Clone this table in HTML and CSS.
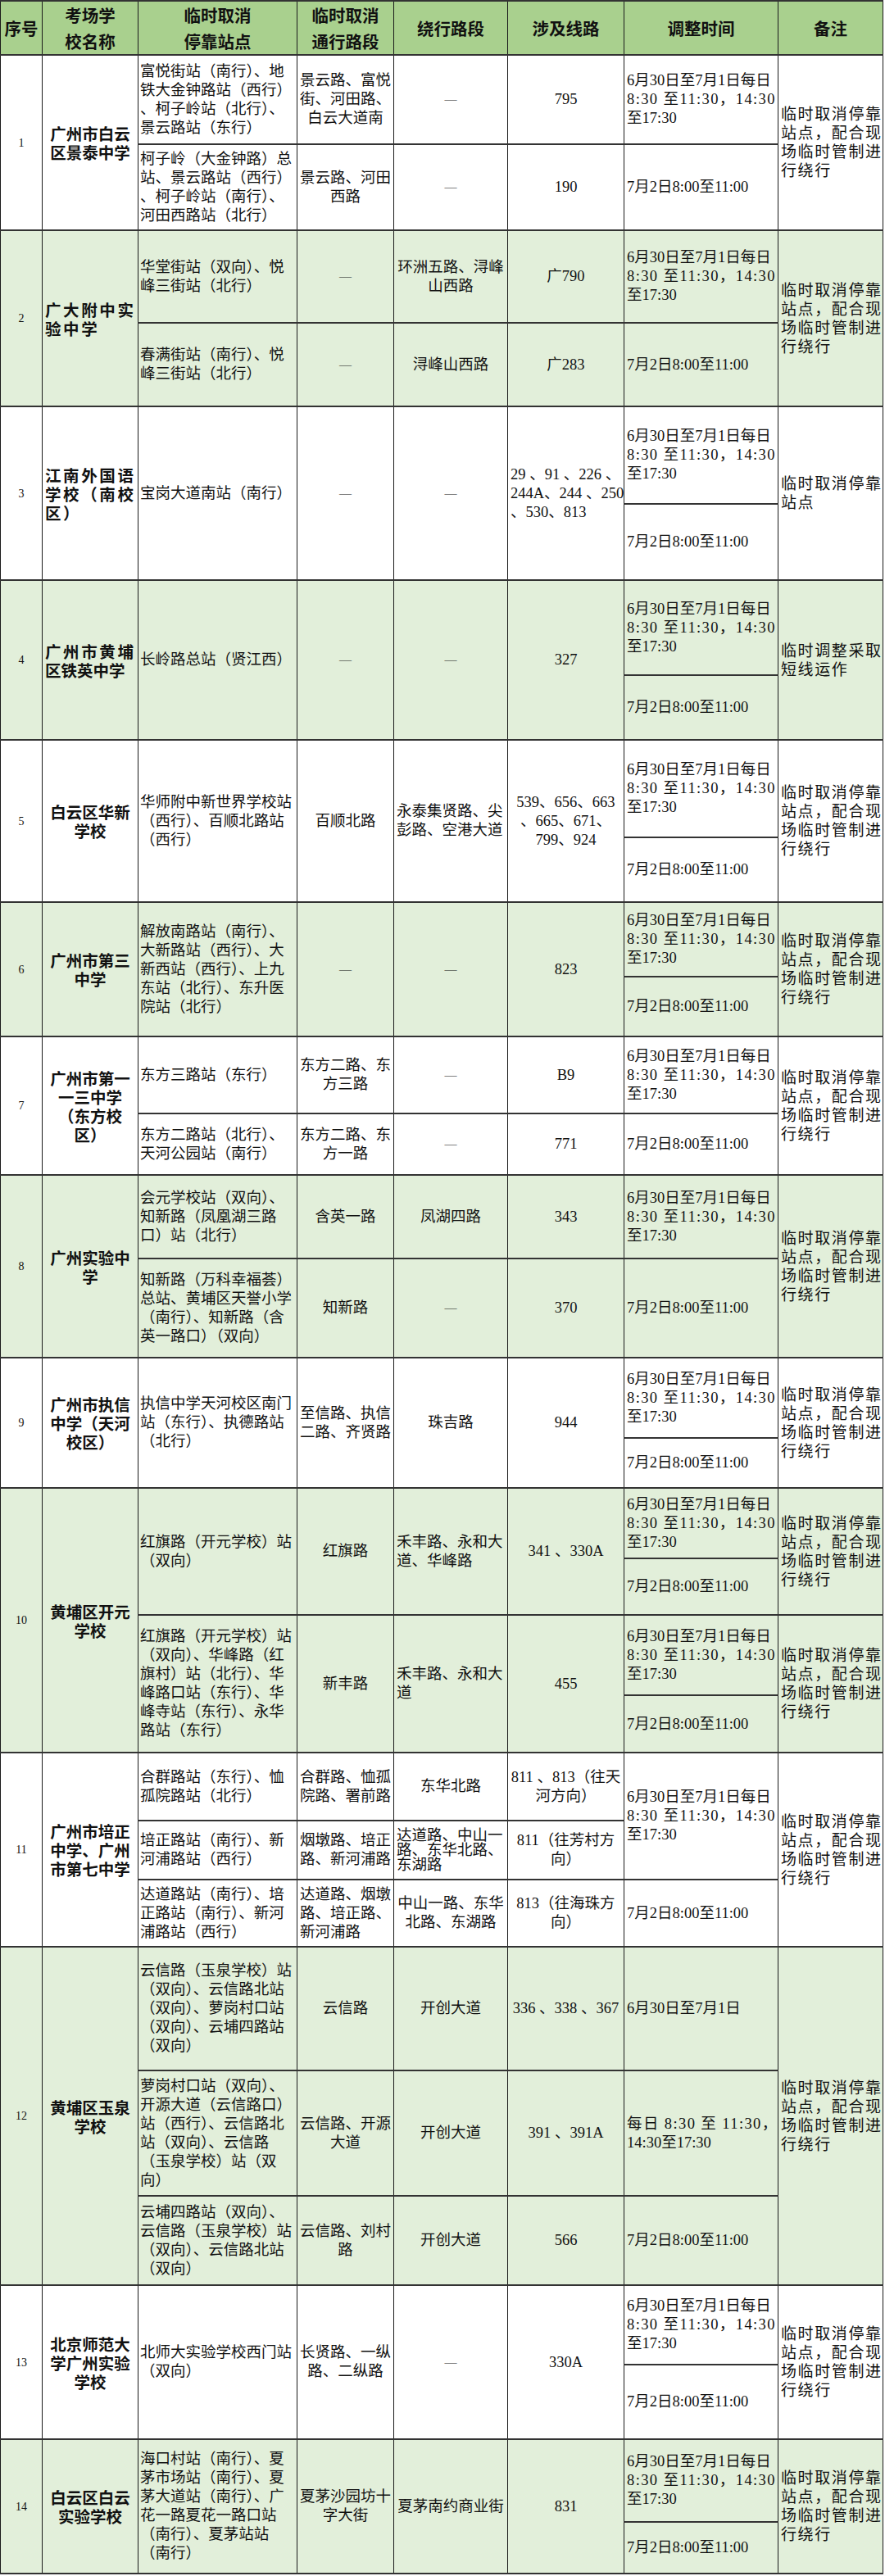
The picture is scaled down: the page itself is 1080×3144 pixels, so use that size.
FILE: index.html
```html
<!DOCTYPE html>
<html lang="zh-CN">
<head>
<meta charset="utf-8">
<title>考场周边公交临时调整</title>
<link rel="stylesheet" href="styles.css">
</head>
<body>
<table class="t">
<colgroup>
<col class="w1"><col class="w2"><col class="w3"><col class="w4"><col class="w5"><col class="w6"><col class="w7"><col class="w8">
</colgroup>
<tr class="h66">
<th>序号</th><th>考场学<br>校名称</th><th>临时取消<br>停靠站点</th><th>临时取消<br>通行路段</th><th>绕行路段</th><th>涉及线路</th><th>调整时间</th><th>备注</th>
</tr>

<!-- 1 -->
<tr class="h109">
<td class="no" rowspan="2">1</td>
<td class="sch" rowspan="2">广州市白云<br>区景泰中学</td>
<td class="stop">富悦街站（南行）、地<br>铁大金钟路站（西行）<br>、柯子岭站（北行）、<br>景云路站（东行）</td>
<td class="ctr">景云路、富悦<br>街、河田路、<br>白云大道南</td>
<td class="ctr dash">—</td>
<td class="ctr">795</td>
<td class="time">6月30日至7月1日每日<br><span class="sp">8:30 至11:30，14:30</span><br>至17:30</td>
<td class="note" rowspan="2">临时取消停靠<br>站点，配合现<br>场临时管制进<br>行绕行</td>
</tr>
<tr class="h105">
<td class="stop">柯子岭（大金钟路）总<br>站、景云路站（西行）<br>、柯子岭站（南行）、<br>河田西路站（北行）</td>
<td class="ctr">景云路、河田<br>西路</td>
<td class="ctr dash">—</td>
<td class="ctr">190</td>
<td class="time">7月2日8:00至11:00</td>
</tr>

<!-- 2 -->
<tr class="g h113">
<td class="no" rowspan="2">2</td>
<td class="sch wide" rowspan="2">广大附中实<br>验中学</td>
<td class="stop">华堂街站（双向）、悦<br>峰三街站（北行）</td>
<td class="ctr dash">—</td>
<td class="ctr">环洲五路、浔峰<br>山西路</td>
<td class="ctr">广790</td>
<td class="time">6月30日至7月1日每日<br><span class="sp">8:30 至11:30，14:30</span><br>至17:30</td>
<td class="note" rowspan="2">临时取消停靠<br>站点，配合现<br>场临时管制进<br>行绕行</td>
</tr>
<tr class="g h102">
<td class="stop">春满街站（南行）、悦<br>峰三街站（北行）</td>
<td class="ctr dash">—</td>
<td class="ctr">浔峰山西路</td>
<td class="ctr">广283</td>
<td class="time">7月2日8:00至11:00</td>
</tr>

<!-- 3 -->
<tr class="h119">
<td class="no" rowspan="2">3</td>
<td class="sch wide" rowspan="2">江南外国语<br>学校（南校<br>区）</td>
<td class="stop" rowspan="2">宝岗大道南站（南行）</td>
<td class="ctr dash" rowspan="2">—</td>
<td class="ctr dash" rowspan="2">—</td>
<td class="lft" rowspan="2">29 、91 、226 、<br>244A、244 、250<br>、530、813</td>
<td class="time">6月30日至7月1日每日<br><span class="sp">8:30 至11:30，14:30</span><br>至17:30</td>
<td class="note" rowspan="2">临时取消停靠<br>站点</td>
</tr>
<tr class="h93">
<td class="time">7月2日8:00至11:00</td>
</tr>

<!-- 4 -->
<tr class="g h116">
<td class="no" rowspan="2">4</td>
<td class="sch lsch" rowspan="2"><span class="ls">广州市黄埔</span><br>区铁英中学</td>
<td class="stop" rowspan="2">长岭路总站（贤江西）</td>
<td class="ctr dash" rowspan="2">—</td>
<td class="ctr dash" rowspan="2">—</td>
<td class="ctr" rowspan="2">327</td>
<td class="time">6月30日至7月1日每日<br><span class="sp">8:30 至11:30，14:30</span><br>至17:30</td>
<td class="note" rowspan="2">临时调整采取<br>短线运作</td>
</tr>
<tr class="g h79">
<td class="time">7月2日8:00至11:00</td>
</tr>

<!-- 5 -->
<tr class="h119">
<td class="no" rowspan="2">5</td>
<td class="sch" rowspan="2">白云区华新<br>学校</td>
<td class="stop" rowspan="2">华师附中新世界学校站<br>（西行）、百顺北路站<br>（西行）</td>
<td class="ctr" rowspan="2">百顺北路</td>
<td class="lft" rowspan="2">永泰集贤路、尖<br>彭路、空港大道</td>
<td class="ctr" rowspan="2">539、656、663<br>、665、671、<br>799、924</td>
<td class="time">6月30日至7月1日每日<br><span class="sp">8:30 至11:30，14:30</span><br>至17:30</td>
<td class="note" rowspan="2">临时取消停靠<br>站点，配合现<br>场临时管制进<br>行绕行</td>
</tr>
<tr class="h79">
<td class="time">7月2日8:00至11:00</td>
</tr>

<!-- 6 -->
<tr class="g h91">
<td class="no" rowspan="2">6</td>
<td class="sch" rowspan="2">广州市第三<br>中学</td>
<td class="stop" rowspan="2">解放南路站（南行）、<br>大新路站（西行）、大<br>新西站（西行）、上九<br>东站（北行）、东升医<br>院站（北行）</td>
<td class="ctr dash" rowspan="2">—</td>
<td class="ctr dash" rowspan="2">—</td>
<td class="ctr" rowspan="2">823</td>
<td class="time">6月30日至7月1日每日<br><span class="sp">8:30 至11:30，14:30</span><br>至17:30</td>
<td class="note" rowspan="2">临时取消停靠<br>站点，配合现<br>场临时管制进<br>行绕行</td>
</tr>
<tr class="g h73">
<td class="time">7月2日8:00至11:00</td>
</tr>

<!-- 7 -->
<tr class="h94">
<td class="no" rowspan="2">7</td>
<td class="sch" rowspan="2">广州市第一<br>一三中学<br>（东方校<br>区）</td>
<td class="stop">东方三路站（东行）</td>
<td class="ctr">东方二路、东<br>方三路</td>
<td class="ctr dash">—</td>
<td class="ctr">B9</td>
<td class="time">6月30日至7月1日每日<br><span class="sp">8:30 至11:30，14:30</span><br>至17:30</td>
<td class="note" rowspan="2">临时取消停靠<br>站点，配合现<br>场临时管制进<br>行绕行</td>
</tr>
<tr class="h75">
<td class="stop">东方二路站（北行）、<br>天河公园站（南行）</td>
<td class="ctr">东方二路、东<br>方一路</td>
<td class="ctr dash">—</td>
<td class="ctr">771</td>
<td class="time">7月2日8:00至11:00</td>
</tr>

<!-- 8 -->
<tr class="g h102">
<td class="no" rowspan="2">8</td>
<td class="sch" rowspan="2">广州实验中<br>学</td>
<td class="stop">会元学校站（双向）、<br>知新路（凤凰湖三路<br>口）站（北行）</td>
<td class="ctr">含英一路</td>
<td class="ctr">凤湖四路</td>
<td class="ctr">343</td>
<td class="time">6月30日至7月1日每日<br><span class="sp">8:30 至11:30，14:30</span><br>至17:30</td>
<td class="note" rowspan="2">临时取消停靠<br>站点，配合现<br>场临时管制进<br>行绕行</td>
</tr>
<tr class="g h121">
<td class="stop">知新路（万科幸福荟）<br>总站、黄埔区天誉小学<br>（南行）、知新路（含<br>英一路口）（双向）</td>
<td class="ctr">知新路</td>
<td class="ctr dash">—</td>
<td class="ctr">370</td>
<td class="time">7月2日8:00至11:00</td>
</tr>

<!-- 9 -->
<tr class="h98">
<td class="no" rowspan="2">9</td>
<td class="sch" rowspan="2">广州市执信<br>中学（天河<br>校区）</td>
<td class="stop" rowspan="2">执信中学天河校区南门<br>站（东行）、执德路站<br>（北行）</td>
<td class="ctr" rowspan="2">至信路、执信<br>二路、齐贤路</td>
<td class="ctr" rowspan="2">珠吉路</td>
<td class="ctr" rowspan="2">944</td>
<td class="time">6月30日至7月1日每日<br><span class="sp">8:30 至11:30，14:30</span><br>至17:30</td>
<td class="note" rowspan="2">临时取消停靠<br>站点，配合现<br>场临时管制进<br>行绕行</td>
</tr>
<tr class="h61">
<td class="time">7月2日8:00至11:00</td>
</tr>

<!-- 10 -->
<tr class="g h86">
<td class="no" rowspan="4">10</td>
<td class="sch" rowspan="4">黄埔区开元<br>学校</td>
<td class="stop" rowspan="2">红旗路（开元学校）站<br>（双向）</td>
<td class="ctr" rowspan="2">红旗路</td>
<td class="lft" rowspan="2">禾丰路、永和大<br>道、华峰路</td>
<td class="ctr" rowspan="2">341 、330A</td>
<td class="time">6月30日至7月1日每日<br><span class="sp">8:30 至11:30，14:30</span><br>至17:30</td>
<td class="note" rowspan="2">临时取消停靠<br>站点，配合现<br>场临时管制进<br>行绕行</td>
</tr>
<tr class="g h69">
<td class="time">7月2日8:00至11:00</td>
</tr>
<tr class="g h98">
<td class="stop" rowspan="2">红旗路（开元学校）站<br>（双向）、华峰路（红<br>旗村）站（北行）、华<br>峰路口站（东行）、华<br>峰寺站（东行）、永华<br>路站（东行）</td>
<td class="ctr" rowspan="2">新丰路</td>
<td class="lft" rowspan="2">禾丰路、永和大<br>道</td>
<td class="ctr" rowspan="2">455</td>
<td class="time">6月30日至7月1日每日<br><span class="sp">8:30 至11:30，14:30</span><br>至17:30</td>
<td class="note" rowspan="2">临时取消停靠<br>站点，配合现<br>场临时管制进<br>行绕行</td>
</tr>
<tr class="g h70">
<td class="time">7月2日8:00至11:00</td>
</tr>

<!-- 11 -->
<tr class="h83">
<td class="no" rowspan="3">11</td>
<td class="sch" rowspan="3">广州市培正<br>中学、广州<br>市第七中学</td>
<td class="stop">合群路站（东行）、恤<br>孤院路站（北行）</td>
<td class="ctr">合群路、恤孤<br>院路、署前路</td>
<td class="ctr">东华北路</td>
<td class="ctr">811 、813（往天<br>河方向）</td>
<td class="time" rowspan="2">6月30日至7月1日每日<br><span class="sp">8:30 至11:30，14:30</span><br>至17:30</td>
<td class="note" rowspan="3">临时取消停靠<br>站点，配合现<br>场临时管制进<br>行绕行</td>
</tr>
<tr class="h72">
<td class="stop">培正路站（南行）、新<br>河浦路站（西行）</td>
<td class="ctr">烟墩路、培正<br>路、新河浦路</td>
<td class="lft tight">达道路、中山一<br>路、东华北路、<br>东湖路</td>
<td class="ctr">811（往芳村方<br>向）</td>
</tr>
<tr class="h82">
<td class="stop">达道路站（南行）、培<br>正路站（南行）、新河<br>浦路站（西行）</td>
<td class="lft">达道路、烟墩<br>路、培正路、<br>新河浦路</td>
<td class="ctr">中山一路、东华<br>北路、东湖路</td>
<td class="ctr">813（往海珠方<br>向）</td>
<td class="time">7月2日8:00至11:00</td>
</tr>

<!-- 12 -->
<tr class="g h151">
<td class="no" rowspan="3">12</td>
<td class="sch" rowspan="3">黄埔区玉泉<br>学校</td>
<td class="stop">云信路（玉泉学校）站<br>（双向）、云信路北站<br>（双向）、萝岗村口站<br>（双向）、云埔四路站<br>（双向）</td>
<td class="ctr">云信路</td>
<td class="ctr">开创大道</td>
<td class="ctr">336 、338 、367</td>
<td class="time">6月30日至7月1日</td>
<td class="note" rowspan="3">临时取消停靠<br>站点，配合现<br>场临时管制进<br>行绕行</td>
</tr>
<tr class="g h153">
<td class="stop">萝岗村口站（双向）、<br>开源大道（云信路口）<br>站（西行）、云信路北<br>站（双向）、云信路<br>（玉泉学校）站（双<br>向）</td>
<td class="ctr">云信路、开源<br>大道</td>
<td class="ctr">开创大道</td>
<td class="ctr">391 、391A</td>
<td class="time"><span class="sp">每日 8:30 至 11:30，</span><br>14:30至17:30</td>
</tr>
<tr class="g h109">
<td class="stop">云埔四路站（双向）、<br>云信路（玉泉学校）站<br>（双向）、云信路北站<br>（双向）</td>
<td class="ctr">云信路、刘村<br>路</td>
<td class="ctr">开创大道</td>
<td class="ctr">566</td>
<td class="time">7月2日8:00至11:00</td>
</tr>

<!-- 13 -->
<tr class="h97">
<td class="no" rowspan="2">13</td>
<td class="sch" rowspan="2">北京师范大<br>学广州实验<br>学校</td>
<td class="stop" rowspan="2">北师大实验学校西门站<br>（双向）</td>
<td class="ctr" rowspan="2">长贤路、一纵<br>路、二纵路</td>
<td class="ctr dash" rowspan="2">—</td>
<td class="ctr" rowspan="2">330A</td>
<td class="time">6月30日至7月1日每日<br><span class="sp">8:30 至11:30，14:30</span><br>至17:30</td>
<td class="note" rowspan="2">临时取消停靠<br>站点，配合现<br>场临时管制进<br>行绕行</td>
</tr>
<tr class="h91">
<td class="time">7月2日8:00至11:00</td>
</tr>

<!-- 14 -->
<tr class="g h101">
<td class="no" rowspan="2">14</td>
<td class="sch" rowspan="2">白云区白云<br>实验学校</td>
<td class="stop" rowspan="2">海口村站（南行）、夏<br>茅市场站（南行）、夏<br>茅大道站（南行）、广<br>花一路夏花一路口站<br>（南行）、夏茅站站<br>（南行）</td>
<td class="ctr" rowspan="2">夏茅沙园坊十<br>字大街</td>
<td class="ctr" rowspan="2">夏茅南约商业街</td>
<td class="ctr" rowspan="2">831</td>
<td class="time">6月30日至7月1日每日<br><span class="sp">8:30 至11:30，14:30</span><br>至17:30</td>
<td class="note" rowspan="2">临时取消停靠<br>站点，配合现<br>场临时管制进<br>行绕行</td>
</tr>
<tr class="g h63">
<td class="time">7月2日8:00至11:00</td>
</tr>
</table>
</body>
</html>
```

FILE: styles.css
```css
html, body {
  margin: 0;
  padding: 0;
  background: #ffffff;
}
body {
  width: 1080px;
}
.t {
  border-collapse: collapse;
  table-layout: fixed;
  width: 1077px;
  font-family: "Liberation Serif", "Noto Sans CJK SC", serif;
  font-size: 18.5px;
  line-height: 23px;
  color: #111111;
}
.w1 { width: 51px; }
.w2 { width: 117px; }
.w3 { width: 194px; }
.w4 { width: 118px; }
.w5 { width: 139px; }
.w6 { width: 142px; }
.w7 { width: 188px; }
.w8 { width: 128px; }

.t td, .t th {
  border-left: 1px solid #1a1a1a;
  border-right: 1px solid #1a1a1a;
  border-top: 2px solid #333333;
  border-bottom: 2px solid #333333;
  padding: 0 2px;
  vertical-align: middle;
  white-space: nowrap;
  overflow: hidden;
  background: #ffffff;
}
.t th {
  background: #a9d08e;
  font-family: "Noto Sans CJK SC", sans-serif;
  font-weight: 700;
  font-size: 20.5px;
  line-height: 32px;
  text-align: center;
  padding: 0;
  color: #111111;
}
.t tr.g td {
  background: #e2efda;
}
.no {
  text-align: center;
  font-family: "Liberation Serif", serif;
  font-size: 14px;
}
.sch {
  font-family: "Noto Sans CJK SC", sans-serif;
  font-weight: 700;
  font-size: 19.5px;
  text-align: center;
}
.t td.wide {
  text-align: left;
  letter-spacing: 2.6px;
  padding-left: 3px;
}
.t td.lsch {
  text-align: left;
  padding-left: 3px;
}
.ls {
  letter-spacing: 2.6px;
}
.stop {
  text-align: left;
}
.ctr {
  text-align: center;
}
.t td.dash {
  font-size: 15px;
}
.t td.lft {
  text-align: left;
  padding-left: 3px;
}
.t td.tight {
  line-height: 18px;
}
.t td.time {
  text-align: left;
  padding-left: 3px;
}
.sp {
  letter-spacing: 1.4px;
}
.t td.note {
  text-align: left;
  font-size: 19px;
  letter-spacing: 1.6px;
  padding-left: 3px;
}

.h61 { height: 61px; }
.h63 { height: 63px; }
.h66 { height: 66px; }
.h69 { height: 69px; }
.h70 { height: 70px; }
.h72 { height: 72px; }
.h73 { height: 73px; }
.h75 { height: 75px; }
.h79 { height: 79px; }
.h82 { height: 82px; }
.h83 { height: 83px; }
.h86 { height: 86px; }
.h91 { height: 91px; }
.h93 { height: 93px; }
.h94 { height: 94px; }
.h97 { height: 97px; }
.h98 { height: 98px; }
.h101 { height: 101px; }
.h102 { height: 102px; }
.h105 { height: 105px; }
.h109 { height: 109px; }
.h113 { height: 113px; }
.h116 { height: 116px; }
.h119 { height: 119px; }
.h121 { height: 121px; }
.h151 { height: 151px; }
.h153 { height: 153px; }
```
